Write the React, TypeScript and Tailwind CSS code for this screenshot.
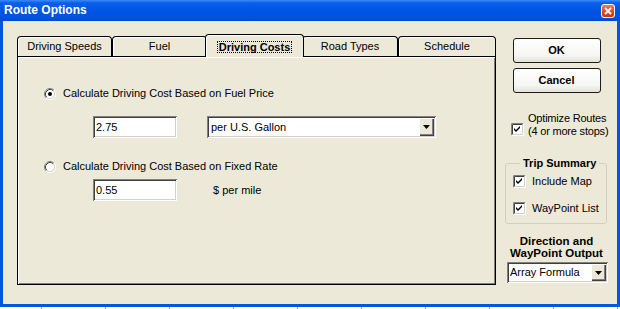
import React from "react";

const Radio = ({ checked }: { checked?: boolean }) => (
  <svg width="12" height="12" viewBox="0 0 12 12" className="shrink-0">
    <circle cx="6" cy="6" r="4.5" fill="#fff" />
    <path d="M2.11 9.89 A5.5 5.5 0 0 1 9.89 2.11" fill="none" stroke="#808080" />
    <path d="M9.89 2.11 A5.5 5.5 0 0 1 2.11 9.89" fill="none" stroke="#fff" />
    <path d="M2.82 9.18 A4.5 4.5 0 0 1 9.18 2.82" fill="none" stroke="#404040" />
    <path d="M9.18 2.82 A4.5 4.5 0 0 1 2.82 9.18" fill="none" stroke="#D4D0C8" />
    {checked && <circle cx="6" cy="6" r="2" fill="#000" />}
  </svg>
);

const Check = () => (
  <svg width="13" height="13" viewBox="0 0 13 13" className="shrink-0">
    <rect x="0" y="0" width="13" height="13" fill="#fff" />
    <path d="M0.5 12.5 V0.5 H12.5" fill="none" stroke="#808080" />
    <path d="M1.5 11.5 V1.5 H11.5" fill="none" stroke="#404040" />
    <path d="M0.5 12.5 H12.5 V0.5" fill="none" stroke="#fff" />
    <path d="M1.5 11.5 H11.5 V1.5" fill="none" stroke="#D4D0C8" />
    <polygon points="3,5 5,7 9,3 9,5 5,9 3,7" fill="#000" />
  </svg>
);

const DropButton = () => (
  <div className="w-[15px] h-full flex items-center justify-center bg-[#ECE9D8] shadow-[inset_1px_1px_#fff,inset_-1px_-1px_#404040,inset_-2px_-2px_#808080]">
    <svg width="7" height="4" viewBox="0 0 7 4">
      <polygon points="0,0 7,0 3.5,4" fill="#000" />
    </svg>
  </div>
);

const sunken =
  "bg-white shadow-[inset_1px_1px_#808080,inset_-1px_-1px_#fff,inset_2px_2px_#404040,inset_-2px_-2px_#D4D0C8]";

const tabs = ["Driving Speeds", "Fuel", "Driving Costs", "Road Types", "Schedule"];
const tabWidths = ["w-[95px]", "w-[95px]", "w-[99px]", "w-[96px]", "w-[98px]"];

export default function App() {
  return (
    <div className="w-[620px] h-[309px] flex flex-col bg-white overflow-hidden font-['Liberation_Sans',Arial,sans-serif] text-[11px] leading-[13px] text-black">
      {/* title bar */}
      <div className="shrink-0 h-[21px] flex items-center pl-[4px] pr-[5px] bg-[linear-gradient(180deg,#3A8CF6_0%,#0A5EEA_14%,#0055E5_50%,#0050DC_88%,#0046C8_100%)]">
        <span className="flex-1 text-white font-bold text-[12px]">Route Options</span>
        <div className="w-[14px] h-[14px] rounded-[3px] border border-white bg-[linear-gradient(180deg,#EE7A52_0%,#D9471F_60%,#C23A16_100%)] flex items-center justify-center">
          <svg width="8" height="8" viewBox="0 0 8 8">
            <path d="M1 1 L7 7 M7 1 L1 7" stroke="#fff" strokeWidth="1.8" />
          </svg>
        </div>
      </div>

      {/* window frame */}
      <div className="flex-1 min-h-0 flex bg-[#0754E0] px-[3px] pb-[3px]">
        <div className="flex-1 flex overflow-hidden bg-[#ECE9D8] pt-[13px] pl-[14px]">
          {/* tab control */}
          <div className="shrink-0 w-[479px] h-[251px] flex flex-col">
            <div className="relative z-10 flex items-end h-[23px] -mb-px">
              {tabs.map((t, i) =>
                i === 2 ? (
                  <div
                    key={t}
                    className={`${tabWidths[i]} -mx-[2px] h-[23px] relative z-10 flex justify-center pt-[6px] bg-[#ECE9D8] border-t border-x border-black rounded-t-[4px] shadow-[inset_1px_1px_#fff]`}
                  >
                    <span className="h-[12px] px-px leading-[10px] border border-dotted border-black font-bold">{t}</span>
                  </div>
                ) : (
                  <div
                    key={t}
                    className={`${tabWidths[i]} h-[20px] mb-px flex items-center justify-center bg-[#ECE9D8] border-t border-x border-black rounded-t-[4px] shadow-[inset_1px_1px_#fff]`}
                  >
                    {t}
                  </div>
                )
              )}
            </div>
            <div className="flex-1 flex flex-col border border-black bg-[#ECE9D8] shadow-[inset_1px_1px_#fff,inset_-1px_-1px_#808080] pl-[26px]">
              <div className="mt-[30px] h-[13px] flex items-center gap-[7px]">
                <Radio checked />
                <span>Calculate Driving Cost Based on Fuel Price</span>
              </div>
              <div className="mt-[16px] flex items-center ml-[49px]">
                <div className={`${sunken} w-[84px] h-[22px] flex items-center pl-[3px]`}>2.75</div>
                <div className={`${sunken} ml-[30px] w-[229px] h-[22px] flex items-center p-[2px]`}>
                  <span className="flex-1 pl-[2px]">per U.S. Gallon</span>
                  <DropButton />
                </div>
              </div>
              <div className="mt-[22px] h-[13px] flex items-center gap-[7px]">
                <Radio />
                <span>Calculate Driving Cost Based on Fixed Rate</span>
              </div>
              <div className="mt-[6px] flex items-center ml-[49px]">
                <div className={`${sunken} w-[84px] h-[22px] flex items-center pl-[3px]`}>0.55</div>
                <span className="ml-[36px]">$ per mile</span>
              </div>
            </div>
          </div>

          {/* right column */}
          <div className="shrink-0 ml-[9px] w-[103px] flex flex-col pt-[4px]">
            <button className="self-center w-[88px] h-[25px] rounded-[3px] border border-[#1C1C1C] bg-[linear-gradient(180deg,#FFFFFF_0%,#F6F6F3_70%,#E4E2D9_100%)] font-bold text-[11px]">
              OK
            </button>
            <button className="self-center mt-[5px] w-[88px] h-[25px] rounded-[3px] border border-[#1C1C1C] bg-[linear-gradient(180deg,#FFFFFF_0%,#F6F6F3_70%,#E4E2D9_100%)] font-bold text-[11px]">
              Cancel
            </button>
            <div className="mt-[19px] flex items-start pl-[6px]">
              <div className="mt-[11px]">
                <Check />
              </div>
              <div className="ml-[4px] whitespace-nowrap tracking-[-0.2px]">
                <div>Optimize Routes</div>
                <div>(4 or more stops)</div>
              </div>
            </div>
            <fieldset className="mt-[19px] w-[102px] border border-[#D0D0BF] rounded-[3px] pl-[7px] pb-[8px]">
              <legend className="ml-[7px] px-[3px] font-bold leading-[13px]">Trip Summary</legend>
              <div className="mt-[5px] h-[13px] flex items-center gap-[6px]">
                <Check />
                <span>Include Map</span>
              </div>
              <div className="mt-[14px] h-[13px] flex items-center gap-[6px]">
                <Check />
                <span>WayPoint List</span>
              </div>
            </fieldset>
            <div className="mt-[11px] text-center font-bold text-[11.5px] leading-[12px] whitespace-nowrap">
              <div>Direction and</div>
              <div>WayPoint Output</div>
            </div>
            <div className={`${sunken} mt-[3px] ml-[2px] w-[101px] h-[21px] flex items-center p-[2px]`}>
              <span className="flex-1 pl-[1px]">Array Formula</span>
              <DropButton />
            </div>
          </div>
        </div>
      </div>

      {/* sheet gridlines below */}
      <div className="shrink-0 h-[2px] flex bg-white">
        <div className="w-[41px] shrink-0" />
        {[0, 1, 2, 3, 4, 5, 6, 7, 8, 9].map((c) => (
          <div key={c} className="w-[64px] shrink-0 border-l border-[#9A9A9A]" />
        ))}
      </div>
    </div>
  );
}
